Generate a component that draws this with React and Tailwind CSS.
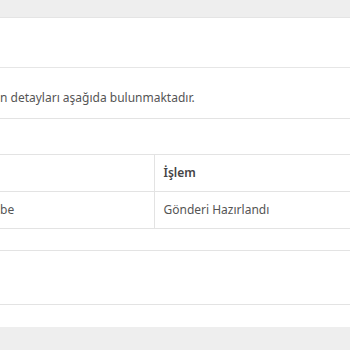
export default function App() {
    return (
        <div className="w-[350px] h-[350px] overflow-hidden bg-white text-[12px] text-[#555] flex flex-col" style={{ fontFamily: '"Noto Sans", "Open Sans", sans-serif' }}>
            <div className="h-[18px] bg-[#eeeeee] border-b border-[#e4e4e4] shrink-0"></div>
            <div className="h-[50px] border-b border-[#e6e6e6] shrink-0"></div>
            <div className="h-[51px] border-b border-[#e3e3e3] flex items-center shrink-0 pt-[10px]">
                <p className="whitespace-nowrap">n detayları aşağıda bulunmaktadır.</p>
            </div>
            <div className="h-[35px] shrink-0"></div>
            <table className="w-full border-collapse shrink-0">
                <thead>
                    <tr className="h-[37px] border-t border-b border-[#e3e3e3]">
                        <th className="w-[154px] text-left font-semibold"></th>
                        <th className="border-l border-[#e3e3e3] text-left font-semibold pl-[9px] text-[#444]">İşlem</th>
                    </tr>
                </thead>
                <tbody>
                    <tr className="h-[37px] border-b border-[#e3e3e3]">
                        <td className="w-[154px]">be</td>
                        <td className="border-l border-[#e3e3e3] pl-[9px]">Gönderi Hazırlandı</td>
                    </tr>
                </tbody>
            </table>
            <div className="h-[22px] border-b border-[#e3e3e3] shrink-0"></div>
            <div className="h-[54px] border-b border-[#e3e3e3] shrink-0"></div>
            <div className="h-[22px] shrink-0"></div>
            <div className="flex-1 bg-[#eeeeee]"></div>
        </div>
    );
}
